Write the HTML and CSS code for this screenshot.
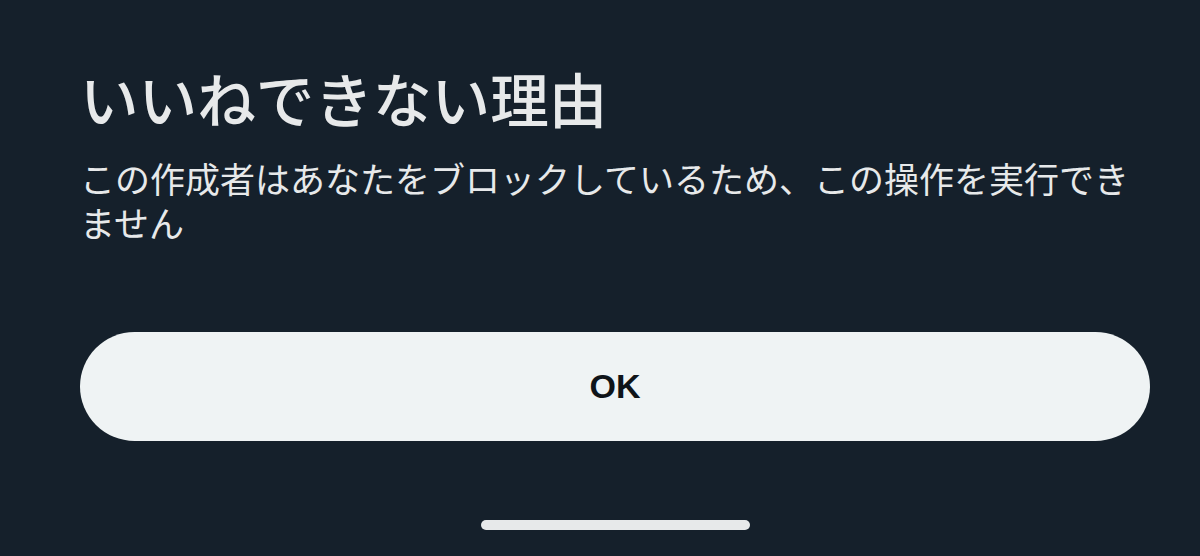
FILE: index.html
```html
<!DOCTYPE html>
<html lang="ja">
<head>
<meta charset="utf-8">
<link rel="stylesheet" href="styles.css">
</head>
<body>
<div class="sheet">
  <div class="content">
    <h1 class="title">いいねできない理由</h1>
    <p class="message">この作成者はあなたをブロックしているため、この操作を実行できません</p>
    <button class="ok-button">OK</button>
    <div class="home-indicator"></div>
  </div>
</div>
</body>
</html>
```
FILE: styles.css
```css
html, body {
  margin: 0;
  padding: 0;
  background: #15202b;
}
.sheet {
  width: 1200px;
  height: 556px;
  background: #15202b;
  box-sizing: border-box;
  padding: 62px 50px 0 80px;
  font-family: "Noto Sans CJK JP", "Noto Sans", sans-serif;
  color: #e7e9ea;
}
.content {
  display: flex;
  flex-direction: column;
}
.title {
  margin: 0;
  font-size: 58.6px;
  line-height: 72px;
  font-weight: 500;
  letter-spacing: 0;
}
.message {
  margin: 22px 0 0 0;
  font-size: 35px;
  line-height: 44px;
  font-weight: 400;
}
.ok-button {
  display: block;
  width: 100%;
  height: 109px;
  margin-top: 88px;
  border: none;
  border-radius: 55px;
  background: #eff3f4;
  color: #0f1419;
  font-family: "Liberation Sans", Arial, sans-serif;
  font-weight: 700;
  font-size: 34px;
  padding: 0;
}
.home-indicator {
  align-self: center;
  width: 269px;
  height: 10px;
  border-radius: 5px;
  background: #e7e9ea;
  margin-top: 79px;
}
```
